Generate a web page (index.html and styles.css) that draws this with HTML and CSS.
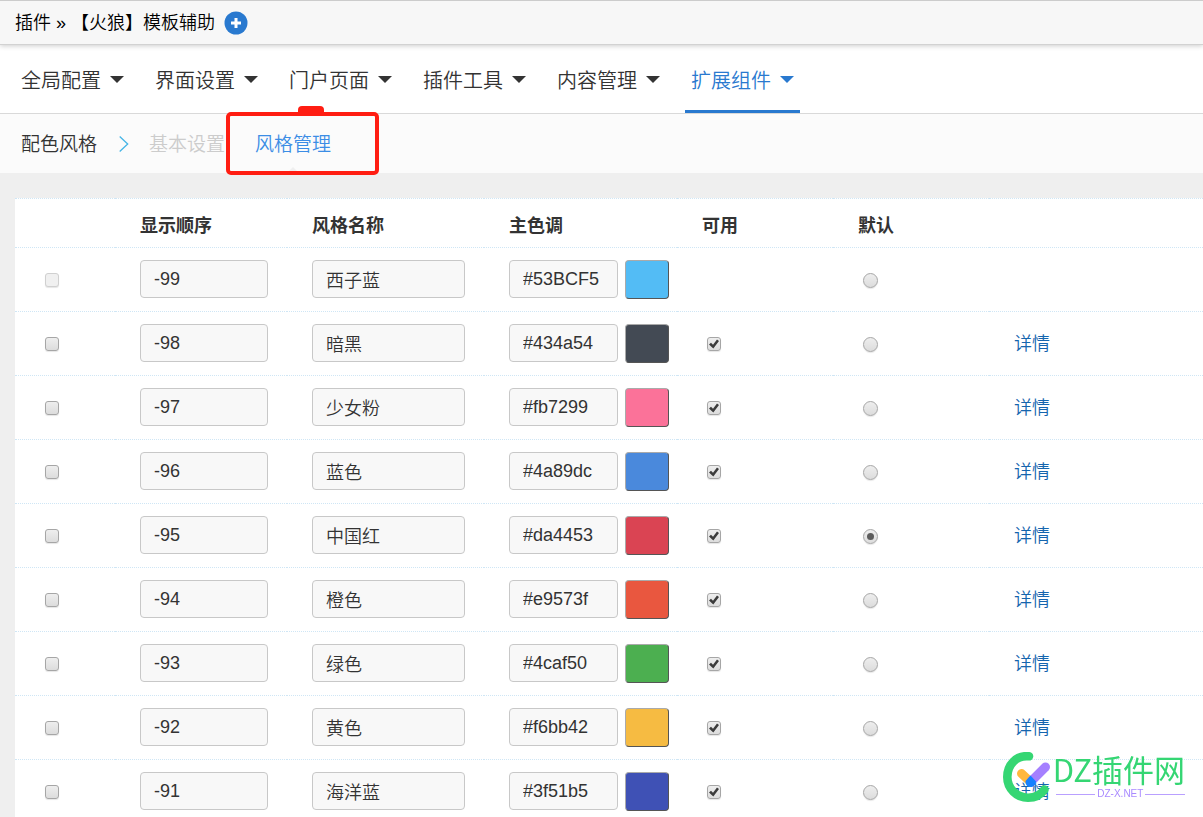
FILE: index.html
```html
<!DOCTYPE html>
<html lang="zh-CN">
<head>
<meta charset="utf-8">
<title>【火狼】模板辅助</title>
<link rel="stylesheet" href="styles.css">
</head>
<body>
<header class="topbar">
  <span>插件 » 【火狼】模板辅助</span>
  <button class="add" type="button" aria-label="添加"><svg width="24" height="24" viewBox="0 0 24 24"><circle cx="12" cy="12" r="11.5" fill="#2979cf"/><path d="M12 7v10M7 12h10" stroke="#fff" stroke-width="3"/></svg></button>
</header>
<nav class="mainnav">
  <a href="#">全局配置<i class="caret"></i></a>
  <a href="#">界面设置<i class="caret"></i></a>
  <a href="#">门户页面<i class="caret"></i></a>
  <a href="#">插件工具<i class="caret"></i></a>
  <a href="#">内容管理<i class="caret"></i></a>
  <a href="#" class="active">扩展组件<i class="caret"></i></a>
</nav>
<nav class="subnav">
  <span class="section">配色风格</span>
  <svg class="chevron" width="10" height="18" viewBox="0 0 10 18"><path d="M.7 1.5 8.7 9 .7 16.5" fill="none" stroke="#45b5e6" stroke-width="1.3"/></svg>
  <a href="#" class="muted">基本设置</a>
  <a href="#" class="current">风格管理<span class="highlight"></span></a>
</nav>
<main class="content">
<table class="styles">
  <colgroup><col class="c-pick"><col class="c-order"><col class="c-name"><col class="c-color"><col class="c-flag"><col class="c-flag"><col></colgroup>
  <thead>
    <tr><th></th><th>显示顺序</th><th>风格名称</th><th>主色调</th><th>可用</th><th>默认</th><th></th></tr>
  </thead>
  <tbody>
    <tr>
      <td><input type="checkbox" aria-label="选择" disabled></td>
      <td><input class="field order" type="text" value="-99" aria-label="显示顺序"></td>
      <td><input class="field name" type="text" value="西子蓝" aria-label="风格名称"></td>
      <td><div class="color"><input class="field hex" type="text" value="#53BCF5" aria-label="主色调"><button class="swatch" type="button" aria-label="选择颜色" style="background-color:#53BCF5"></button></div></td>
      <td></td>
      <td><input type="radio" name="default" aria-label="默认"></td>
      <td></td>
    </tr>
    <tr>
      <td><input type="checkbox" aria-label="选择"></td>
      <td><input class="field order" type="text" value="-98" aria-label="显示顺序"></td>
      <td><input class="field name" type="text" value="暗黑" aria-label="风格名称"></td>
      <td><div class="color"><input class="field hex" type="text" value="#434a54" aria-label="主色调"><button class="swatch" type="button" aria-label="选择颜色" style="background-color:#434a54"></button></div></td>
      <td><input type="checkbox" aria-label="可用" checked></td>
      <td><input type="radio" name="default" aria-label="默认"></td>
      <td><a href="#">详情</a></td>
    </tr>
    <tr>
      <td><input type="checkbox" aria-label="选择"></td>
      <td><input class="field order" type="text" value="-97" aria-label="显示顺序"></td>
      <td><input class="field name" type="text" value="少女粉" aria-label="风格名称"></td>
      <td><div class="color"><input class="field hex" type="text" value="#fb7299" aria-label="主色调"><button class="swatch" type="button" aria-label="选择颜色" style="background-color:#fb7299"></button></div></td>
      <td><input type="checkbox" aria-label="可用" checked></td>
      <td><input type="radio" name="default" aria-label="默认"></td>
      <td><a href="#">详情</a></td>
    </tr>
    <tr>
      <td><input type="checkbox" aria-label="选择"></td>
      <td><input class="field order" type="text" value="-96" aria-label="显示顺序"></td>
      <td><input class="field name" type="text" value="蓝色" aria-label="风格名称"></td>
      <td><div class="color"><input class="field hex" type="text" value="#4a89dc" aria-label="主色调"><button class="swatch" type="button" aria-label="选择颜色" style="background-color:#4a89dc"></button></div></td>
      <td><input type="checkbox" aria-label="可用" checked></td>
      <td><input type="radio" name="default" aria-label="默认"></td>
      <td><a href="#">详情</a></td>
    </tr>
    <tr>
      <td><input type="checkbox" aria-label="选择"></td>
      <td><input class="field order" type="text" value="-95" aria-label="显示顺序"></td>
      <td><input class="field name" type="text" value="中国红" aria-label="风格名称"></td>
      <td><div class="color"><input class="field hex" type="text" value="#da4453" aria-label="主色调"><button class="swatch" type="button" aria-label="选择颜色" style="background-color:#da4453"></button></div></td>
      <td><input type="checkbox" aria-label="可用" checked></td>
      <td><input type="radio" name="default" aria-label="默认" checked></td>
      <td><a href="#">详情</a></td>
    </tr>
    <tr>
      <td><input type="checkbox" aria-label="选择"></td>
      <td><input class="field order" type="text" value="-94" aria-label="显示顺序"></td>
      <td><input class="field name" type="text" value="橙色" aria-label="风格名称"></td>
      <td><div class="color"><input class="field hex" type="text" value="#e9573f" aria-label="主色调"><button class="swatch" type="button" aria-label="选择颜色" style="background-color:#e9573f"></button></div></td>
      <td><input type="checkbox" aria-label="可用" checked></td>
      <td><input type="radio" name="default" aria-label="默认"></td>
      <td><a href="#">详情</a></td>
    </tr>
    <tr>
      <td><input type="checkbox" aria-label="选择"></td>
      <td><input class="field order" type="text" value="-93" aria-label="显示顺序"></td>
      <td><input class="field name" type="text" value="绿色" aria-label="风格名称"></td>
      <td><div class="color"><input class="field hex" type="text" value="#4caf50" aria-label="主色调"><button class="swatch" type="button" aria-label="选择颜色" style="background-color:#4caf50"></button></div></td>
      <td><input type="checkbox" aria-label="可用" checked></td>
      <td><input type="radio" name="default" aria-label="默认"></td>
      <td><a href="#">详情</a></td>
    </tr>
    <tr>
      <td><input type="checkbox" aria-label="选择"></td>
      <td><input class="field order" type="text" value="-92" aria-label="显示顺序"></td>
      <td><input class="field name" type="text" value="黄色" aria-label="风格名称"></td>
      <td><div class="color"><input class="field hex" type="text" value="#f6bb42" aria-label="主色调"><button class="swatch" type="button" aria-label="选择颜色" style="background-color:#f6bb42"></button></div></td>
      <td><input type="checkbox" aria-label="可用" checked></td>
      <td><input type="radio" name="default" aria-label="默认"></td>
      <td><a href="#">详情</a></td>
    </tr>
    <tr>
      <td><input type="checkbox" aria-label="选择"></td>
      <td><input class="field order" type="text" value="-91" aria-label="显示顺序"></td>
      <td><input class="field name" type="text" value="海洋蓝" aria-label="风格名称"></td>
      <td><div class="color"><input class="field hex" type="text" value="#3f51b5" aria-label="主色调"><button class="swatch" type="button" aria-label="选择颜色" style="background-color:#3f51b5"></button></div></td>
      <td><input type="checkbox" aria-label="可用" checked></td>
      <td><input type="radio" name="default" aria-label="默认"></td>
      <td><a href="#">详情</a></td>
    </tr>
  </tbody>
</table>
</main>
<div class="watermark">
  <svg width="50" height="50" viewBox="0 0 50 50" fill="none" stroke-linecap="round">
    <path d="M26 4.3C13 3 4.3 13 4.3 25A20.7 20.7 0 0 0 25 45.7C32.5 45.7 38 42.5 41.5 37.5" stroke="#35d673" stroke-width="8.6"/>
    <path d="M18.5 21.5 27 29.5" stroke="#ffb83d" stroke-width="9"/>
    <path d="M42.5 15 29 28.5" stroke="#a580ff" stroke-width="9"/>
    <path d="M27.5 23.5 33 29.5C33 33 30.5 35 27.5 35S22.5 33 22.5 29Z" fill="#1681ff"/>
  </svg>
  <div class="brand">
    <span class="brand-name">DZ插件网</span>
    <span class="brand-url">DZ-X.NET</span>
  </div>
</div>
</body>
</html>
```

FILE: styles.css
```css
* { box-sizing: border-box; }
html, body { height: 100%; }
body {
  margin: 0;
  overflow: auto;
  scrollbar-width: none;
  background: #efefef;
  color: #333;
  font: 350 18px/24px "Liberation Sans", "Noto Sans CJK SC", sans-serif;
}
a { color: #1565ae; text-decoration: none; }

.topbar {
  display: flex;
  align-items: center;
  gap: 9px;
  height: 45px;
  padding: 0 15px;
  position: relative;
  background: #f7f7f7;
  border-top: 1px solid #ccc;
  border-bottom: 1px solid #d2d2d2;
  box-shadow: 0 1px 5px rgba(0, 0, 0, .2);
  color: #000;
}
.add { display: flex; padding: 0; border: 0; background: none; }

.mainnav {
  display: flex;
  gap: 19px;
  height: 69px;
  padding: 0 15px;
  background: #fff;
  border-bottom: 1px solid #d9d9d9;
  font-size: 20px;
}
.mainnav a {
  display: flex;
  align-items: center;
  gap: 9px;
  padding: 6px 6px 0;
  border-bottom: 3px solid transparent;
  color: #333;
}
.mainnav .active { color: #2979cf; border-color: #2979cf; }
.caret {
  margin-bottom: 2px;
  border: 7px solid transparent;
  border-top-color: currentColor;
  border-bottom-width: 0;
}

.subnav {
  display: flex;
  align-items: center;
  height: 59px;
  padding: 0 21px;
  background: #fbfbfb;
  font-size: 19px;
  line-height: 26px;
}
.section, .muted { padding-top: 2px; }
.chevron { margin: 0 20px 0 22px; }
.muted { color: #ccc; }
.current {
  display: flex;
  align-items: center;
  align-self: stretch;
  position: relative;
  margin-left: 30px;
  padding-top: 2px;
  color: #3b8de5;
}
.current::before {
  content: "";
  position: absolute;
  left: 50%;
  bottom: 0;
  transform: translateX(-50%);
  border: 6px solid transparent;
  border-top: 0;
  border-bottom-color: #efefef;
}
.highlight {
  position: absolute;
  inset: -2px -48px -2px -29px;
  border: 4px solid #ff1d12;
  border-radius: 5px;
}
.highlight::before {
  content: "";
  position: absolute;
  top: -10px;
  left: 68px;
  width: 26px;
  height: 8px;
  border-radius: 4px 4px 0 0;
  background: #ff1d12;
}

.content { padding: 25px 0 0 15px; }
.styles {
  width: 100%;
  table-layout: fixed;
  border-spacing: 0;
  background: #fff;
}
.c-pick { width: 100px; }
.c-order { width: 172px; }
.c-name { width: 197px; }
.c-color { width: 193px; }
.c-flag { width: 156px; }
th, td {
  height: 64px;
  padding: 0 0 0 25px;
  border-bottom: 1px dotted #cfe6f5;
  text-align: left;
}
th { height: 50px; border-top: 1px dotted #cfe6f5; font-weight: 700; padding-top: 5px; }
.field {
  display: block;
  height: 38px;
  margin-bottom: 1px;
  padding: 0 13px;
  border: 1px solid #c8c8c8;
  border-radius: 4px;
  background: #f8f8f8;
  color: #333;
  font: inherit;
}
.order { width: 128px; }
.name { width: 153px; }
.hex { width: 109px; }
.color { display: flex; gap: 7px; }
.swatch {
  width: 44px;
  height: 39px;
  padding: 0;
  border: 1px solid;
  border-color: #aaa #555 #555 #aaa;
  border-radius: 4px;
}
input[type="checkbox"], input[type="radio"] {
  appearance: none;
  display: grid;
  place-items: center;
  width: 14px;
  height: 14px;
  margin: 1px 0 0 5px;
  border: 1px solid #a6a6a6;
  border-radius: 3px;
  background: linear-gradient(#eee, #dcdcdc);
  box-shadow: 0 1px 1px rgba(0, 0, 0, .1);
}
input[type="radio"] { width: 15px; height: 15px; margin-top: 2px; border-radius: 50%; }
input[type="checkbox"]:disabled { border-color: #d0d0d0; background: #f0f0f0; }
input[type="checkbox"]:checked::before {
  content: "";
  width: 10px;
  height: 10px;
  background: #3c3c3c;
  clip-path: polygon(0 55%, 20% 38%, 40% 58%, 80% 5%, 100% 20%, 43% 95%);
}
input[type="radio"]:checked::before {
  content: "";
  width: 7px;
  height: 7px;
  border-radius: 50%;
  background: #5c5c5c;
}

.watermark {
  position: fixed;
  right: 18px;
  bottom: 15px;
  display: flex;
  align-items: flex-start;
  pointer-events: none;
}
.brand { display: flex; flex-direction: column; gap: 4px; }
.brand-name {
  color: #35d673;
  font: 400 31px/34px "Noto Sans CJK SC", sans-serif;
}
.brand-url {
  display: flex;
  align-items: center;
  gap: 2px;
  margin-left: 3px;
  color: #a98aff;
  font: 400 10px/8px "Liberation Sans", sans-serif;
}
.brand-url::before, .brand-url::after {
  content: "";
  flex: 1;
  height: 1px;
  background: #b9a0ff;
}
```
